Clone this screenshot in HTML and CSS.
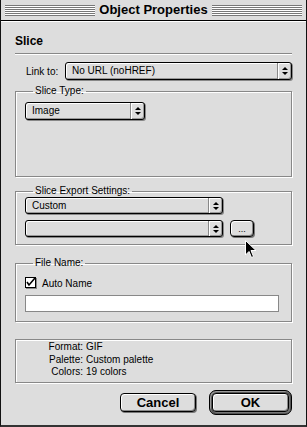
FILE: index.html
```html
<!DOCTYPE HTML>
<html lang="en">
<head>
	<title>Object Properties</title>
	<meta charset="utf-8">
	<meta name="viewport" content="width=device-width, initial-scale=1">
	<link rel="stylesheet" href="styles.css">
</head>
<body>

	<div class="window">
		<!-- title bar -->
		<div class="titlebar">
			<span class="stripes"></span>
			<span class="title">Object Properties</span>
			<span class="stripes"></span>
		</div>

		<div class="content">
			<h3 class="heading">Slice</h3>

			<div class="link-row">
				<span class="label">Link to:</span>
				<div class="popup popup-wide">
					<span class="popup-text">No URL (noHREF)</span>
					<span class="popup-arrows"><span class="up"></span><span class="down"></span></span>
				</div>
			</div>

			<fieldset class="group group-type">
				<legend>Slice Type:</legend>
				<div class="popup popup-image">
					<span class="popup-text">Image</span>
					<span class="popup-arrows"><span class="up"></span><span class="down"></span></span>
				</div>
			</fieldset>

			<fieldset class="group group-export">
				<legend>Slice Export Settings:</legend>
				<div class="popup popup-export">
					<span class="popup-text">Custom</span>
					<span class="popup-arrows"><span class="up"></span><span class="down"></span></span>
				</div>
				<div class="export-row">
					<div class="popup popup-export">
						<span class="popup-text"></span>
						<span class="popup-arrows"><span class="up"></span><span class="down"></span></span>
					</div>
					<button class="btn btn-dots">...</button>
				</div>
			</fieldset>

			<fieldset class="group group-file">
				<legend>File Name:</legend>
				<label class="check-row">
					<svg class="checkbox" width="12" height="12" viewBox="0 0 12 12">
						<rect x="0.5" y="0.5" width="10" height="10" fill="#fff" stroke="#000"/>
						<path d="M2 5 L4 8 L10 1" fill="none" stroke="#000" stroke-width="1.6"/>
						<rect x="11" y="1" width="1" height="11" fill="#888"/>
						<rect x="1" y="11" width="11" height="1" fill="#888"/>
					</svg>
					<span>Auto Name</span>
				</label>
				<div class="textfield"></div>
			</fieldset>

			<!-- export info -->
			<div class="info">
				<span class="info-key">Format:</span><span>GIF</span>
				<span class="info-key">Palette:</span><span>Custom palette</span>
				<span class="info-key">Colors:</span><span>19 colors</span>
			</div>

			<div class="buttons">
				<button class="btn btn-cancel">Cancel</button>
				<div class="default-ring"><button class="btn btn-ok">OK</button></div>
			</div>
		</div>

		<!-- mouse pointer over the dialog -->
		<svg class="cursor" width="12" height="19" viewBox="0 0 12 19">
			<path d="M0.5 0.5 L0.5 15 L4 11.5 L6.5 17.5 L8.5 16.5 L6 10.5 L11 10.5 Z" fill="#000" stroke="#fff" stroke-width="1"/>
		</svg>
	</div>

</body>
</html>
```

FILE: styles.css
```css
body {
	margin: 0;
	background-color: #ddd;
	font-family: "Liberation Sans", Arial, sans-serif;
	font-size: 10px;
	color: #000;
}
.window {
	position: relative;
	width: 305px;
	height: 425px;
	border-left: 1px solid #111;
	border-right: 1px solid #111;
	border-bottom: 2px solid #333;
	background-color: #ddd;
}

/* title bar */
.titlebar {
	display: flex;
	align-items: center;
	height: 20px;
	padding: 0 4px;
	border-bottom: 1px solid #000;
	background-color: #ddd;
}
.stripes {
	flex: 1;
	height: 11px;
	background: repeating-linear-gradient(to bottom, #777 0, #777 1px, #fff 1px, #fff 2px);
}
.title {
	padding: 0 4px;
	font-weight: bold;
	font-size: 13px;
	line-height: 16px;
}

.content {
	display: flex;
	flex-direction: column;
	padding: 0 14px;
	border-top: 1px solid #fff;
}
.heading {
	margin: 12px 0 0 0;
	font-size: 12px;
	line-height: 14px;
	padding-bottom: 5px;
	border-bottom: 1px solid #888;
	box-shadow: 0 1px 0 #fff;
}

/* link row */
.link-row {
	display: flex;
	align-items: center;
	margin-top: 8px;
	padding-left: 11px;
}
.label {
	width: 39px;
}

/* popup menus */
.popup {
	display: flex;
	align-items: stretch;
	height: 16px;
	border: 1px solid #000;
	border-radius: 3px;
	background-color: #ddd;
	box-shadow: inset 1px 1px 0 #fff, inset -1px -1px 0 #999, 1px 1px 0 #888;
}
.popup-wide {
	flex: 1;
}
.popup-image {
	width: 118px;
}
.popup-export {
	width: 196px;
	height: 15px;
}
.popup-text {
	flex: 1;
	padding-left: 6px;
	line-height: 16px;
}
.popup-export .popup-text {
	line-height: 15px;
}
.popup-arrows {
	display: flex;
	flex-direction: column;
	align-items: center;
	justify-content: center;
	gap: 2px;
	width: 13px;
	border-left: 1px solid #888;
	box-shadow: inset 1px 0 0 #fff;
}
.up {
	width: 0;
	height: 0;
	border-left: 3px solid transparent;
	border-right: 3px solid transparent;
	border-bottom: 3px solid #000;
}
.down {
	width: 0;
	height: 0;
	border-left: 3px solid transparent;
	border-right: 3px solid transparent;
	border-top: 3px solid #000;
}

/* group boxes */
.group {
	margin: 0;
	padding: 0 9px;
	border: 1px solid #888;
	box-shadow: 1px 1px 0 #fff, inset 1px 1px 0 #fff;
	min-width: 0;
}
.group legend {
	margin-left: 8px;
	padding: 0 2px;
	line-height: 12px;
}
.group-type {
	margin-top: 5px;
	height: 90px;
}
.group-type .popup {
	margin-top: 5px;
}
.group-export {
	margin-top: 8px;
	padding-bottom: 7px;
}
.group-export > .popup {
	margin-top: 0;
}
.export-row {
	display: flex;
	gap: 7px;
	margin-top: 6px;
}
.group-file {
	margin-top: 12px;
	padding-bottom: 9px;
}
.check-row {
	display: flex;
	align-items: center;
	gap: 5px;
	margin-top: 8px;
}
.checkbox {
	display: block;
}
.textfield {
	margin-top: 6px;
	width: 252px;
	height: 15px;
	background-color: #fff;
	border: 1px solid #888;
}

/* info box */
.info {
	display: grid;
	grid-template-columns: 67px 1fr;
	column-gap: 3px;
	margin-top: 17px;
	padding: 1px 0 3px 0;
	line-height: 12.5px;
	border: 1px solid #888;
	box-shadow: 1px 1px 0 #fff, inset 1px 1px 0 #fff;
}
.info-key {
	text-align: right;
}

/* buttons */
.btn {
	font-family: "Liberation Sans", Arial, sans-serif;
	padding: 0;
	border: 1px solid #000;
	border-radius: 4px;
	background-color: #ddd;
	box-shadow: inset 1px 1px 0 #fff, inset -1px -1px 0 #888, 1px 1px 0 #777;
	color: #000;
}
.btn-dots {
	width: 24px;
	height: 17px;
	font-size: 9px;
	line-height: 10px;
}
.buttons {
	display: flex;
	justify-content: flex-end;
	align-items: center;
	gap: 13px;
	margin-top: 7px;
}
.btn-cancel,
.btn-ok {
	height: 19px;
	font-size: 13px;
	font-weight: bold;
}
.btn-cancel {
	width: 76px;
}
.btn-ok {
	display: block;
	width: 77px;
}
.default-ring {
	padding: 2px;
	border: 1px solid #000;
	border-radius: 7px;
	background-color: #555;
	box-shadow: inset 1px 1px 0 #999;
}

.cursor {
	position: absolute;
	left: 244px;
	top: 240px;
}
```
